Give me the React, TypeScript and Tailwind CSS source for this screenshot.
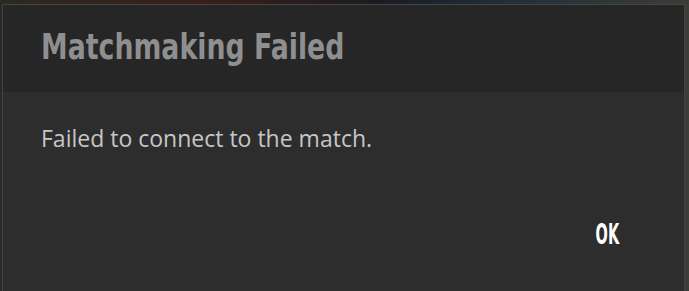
import React from 'react';

const Backdrop = () => (
  <div className="absolute inset-0 bg-[linear-gradient(90deg,#2b2a22_0%,#3a1e1a_30%,#1a1c22_55%,#23303a_75%,#3b3d36_100%)]" />
);

const display = { fontFamily: '"DejaVu Sans", "Liberation Sans", sans-serif' };

const App = () => {
  return (
    <div className="relative w-[689px] h-[291px] overflow-hidden bg-[#1e1e1c]">
      <Backdrop />
      <div className="relative ml-[2px] mt-[4px] w-[683px] h-[300px] border border-[#444442] bg-[#2d2d2d] flex flex-col">
        <div className="h-[87px] bg-[#262626] pl-[38px] pt-[25px]">
          <h1
            className="inline-block origin-left scale-x-[0.765] text-[35px] leading-none font-bold text-[#8f8f8f] whitespace-nowrap"
            style={display}
          >
            Matchmaking Failed
          </h1>
        </div>
        <div className="px-[38px] pt-[35px]">
          <p
            className="text-[23px] leading-none text-[#c6c6c6]"
            style={{ fontFamily: '"Open Sans", "Noto Sans", sans-serif' }}
          >
            Failed to connect to the match.
          </p>
        </div>
        <div className="flex justify-end pr-[65px] pt-[70px]">
          <button
            className="origin-right scale-x-[0.5] text-[29px] font-bold text-white leading-none"
            style={display}
          >
            OK
          </button>
        </div>
      </div>
    </div>
  );
};

export default App;
